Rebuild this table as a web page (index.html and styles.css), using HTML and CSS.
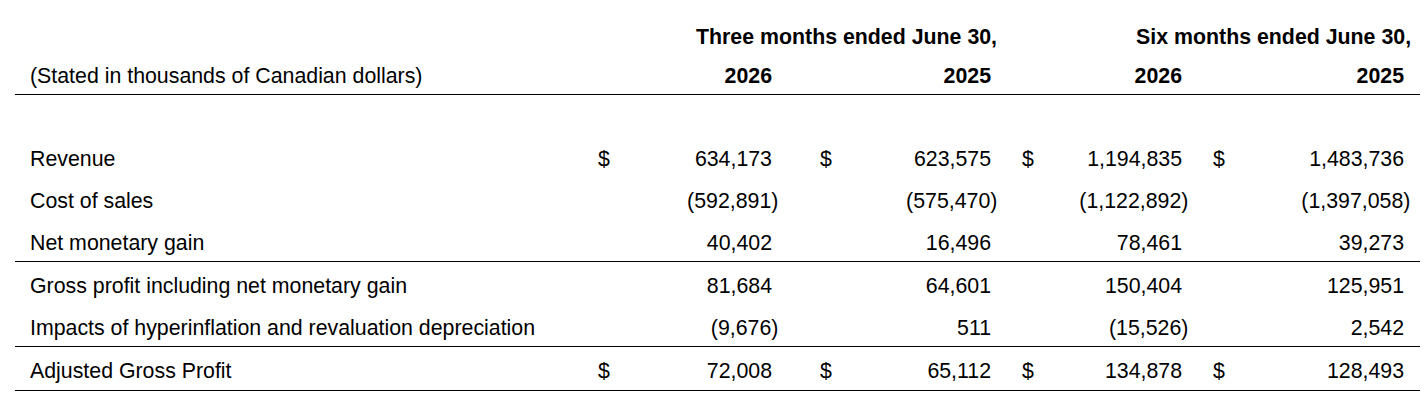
FILE: index.html
```html
<!DOCTYPE html>
<html lang="en">
<head>
<meta charset="utf-8">
<title>Adjusted Gross Profit</title>
<link rel="stylesheet" href="styles.css">
</head>
<body>
<table class="fin">
  <colgroup>
    <col class="c-label">
    <col class="c-cur">
    <col class="c-n1">
    <col class="c-cur2">
    <col class="c-n2">
    <col class="c-cur3">
    <col class="c-n3">
    <col class="c-cur4">
    <col class="c-n4">
  </colgroup>
  <thead>
    <tr class="hrow">
      <th class="lbl"></th>
      <th class="period p1" colspan="4">Three months ended June 30,</th>
      <th class="period p2" colspan="4">Six months ended June 30,</th>
    </tr>
    <tr class="hrow yrow">
      <th class="lbl note">(Stated in thousands of Canadian dollars)</th>
      <th class="cur"></th>
      <th class="num n1">2026</th>
      <th class="cur c2"></th>
      <th class="num n2">2025</th>
      <th class="cur c3"></th>
      <th class="num n3">2026</th>
      <th class="cur c4"></th>
      <th class="num n4">2025</th>
    </tr>
  </thead>
  <tbody>
    <tr class="spacer"><td colspan="9"></td></tr>
    <tr>
      <td class="lbl">Revenue</td>
      <td class="cur">$</td>
      <td class="num n1">634,173</td>
      <td class="cur c2">$</td>
      <td class="num n2">623,575</td>
      <td class="cur c3">$</td>
      <td class="num n3">1,194,835</td>
      <td class="cur c4">$</td>
      <td class="num n4">1,483,736</td>
    </tr>
    <tr>
      <td class="lbl">Cost of sales</td>
      <td class="cur"></td>
      <td class="num n1">(592,891<span class="rp">)</span></td>
      <td class="cur c2"></td>
      <td class="num n2">(575,470<span class="rp">)</span></td>
      <td class="cur c3"></td>
      <td class="num n3">(1,122,892<span class="rp">)</span></td>
      <td class="cur c4"></td>
      <td class="num n4">(1,397,058<span class="rp">)</span></td>
    </tr>
    <tr class="ruled">
      <td class="lbl">Net monetary gain</td>
      <td class="cur"></td>
      <td class="num n1">40,402</td>
      <td class="cur c2"></td>
      <td class="num n2">16,496</td>
      <td class="cur c3"></td>
      <td class="num n3">78,461</td>
      <td class="cur c4"></td>
      <td class="num n4">39,273</td>
    </tr>
    <tr>
      <td class="lbl">Gross profit including net monetary gain</td>
      <td class="cur"></td>
      <td class="num n1">81,684</td>
      <td class="cur c2"></td>
      <td class="num n2">64,601</td>
      <td class="cur c3"></td>
      <td class="num n3">150,404</td>
      <td class="cur c4"></td>
      <td class="num n4">125,951</td>
    </tr>
    <tr class="ruled">
      <td class="lbl">Impacts of hyperinflation and revaluation depreciation</td>
      <td class="cur"></td>
      <td class="num n1">(9,676<span class="rp">)</span></td>
      <td class="cur c2"></td>
      <td class="num n2">511</td>
      <td class="cur c3"></td>
      <td class="num n3">(15,526<span class="rp">)</span></td>
      <td class="cur c4"></td>
      <td class="num n4">2,542</td>
    </tr>
    <tr class="ruled last">
      <td class="lbl">Adjusted Gross Profit</td>
      <td class="cur">$</td>
      <td class="num n1">72,008</td>
      <td class="cur c2">$</td>
      <td class="num n2">65,112</td>
      <td class="cur c3">$</td>
      <td class="num n3">134,878</td>
      <td class="cur c4">$</td>
      <td class="num n4">128,493</td>
    </tr>
  </tbody>
</table>
</body>
</html>
```

FILE: styles.css
```css
html, body {
  margin: 0;
  padding: 0;
  background: #ffffff;
}

body {
  font-family: "Liberation Sans", Arial, Helvetica, sans-serif;
  font-size: 16pt;
  color: #000000;
}

.fin {
  border-collapse: collapse;
  table-layout: fixed;
  width: 1405px;
  margin: 16px 0 0 15px;
}

.c-label { width: 575px; }
.c-cur   { width: 30px; }
.c-n1    { width: 192px; }
.c-cur2  { width: 28px; }
.c-n2    { width: 174px; }
.c-cur3  { width: 26px; }
.c-n3    { width: 165px; }
.c-cur4  { width: 25px; }
.c-n4    { width: 190px; }

.fin th,
.fin td {
  padding: 12px 0 6px 0;
  line-height: 24px;
  white-space: nowrap;
  font-weight: normal;
  text-align: left;
  vertical-align: middle;
}

.hrow th {
  padding-top: 9px;
  padding-bottom: 6px;
  font-weight: bold;
}

.yrow th {
  border-bottom: 1px solid #000000;
}

.fin .note {
  font-weight: normal;
}

.lbl {
  padding-left: 15px !important;
}

.cur {
  padding-left: 8px !important;
}

.num {
  text-align: right !important;
}

.n1 { padding-right: 40px !important; }
.n2 { padding-right: 23px !important; }
.n3 { padding-right: 23px !important; }
.n4 { padding-right: 16px !important; }

.period {
  text-align: right !important;
}

.p1 { padding-right: 17px !important; }
.p2 { padding-right: 9px !important; }

.rp {
  margin-right: -0.3em;
}

.spacer td {
  height: 40px;
  padding: 0 !important;
}

.ruled td {
  border-bottom: 1px solid #000000;
}

.last td {
  padding-bottom: 7px;
}
```
